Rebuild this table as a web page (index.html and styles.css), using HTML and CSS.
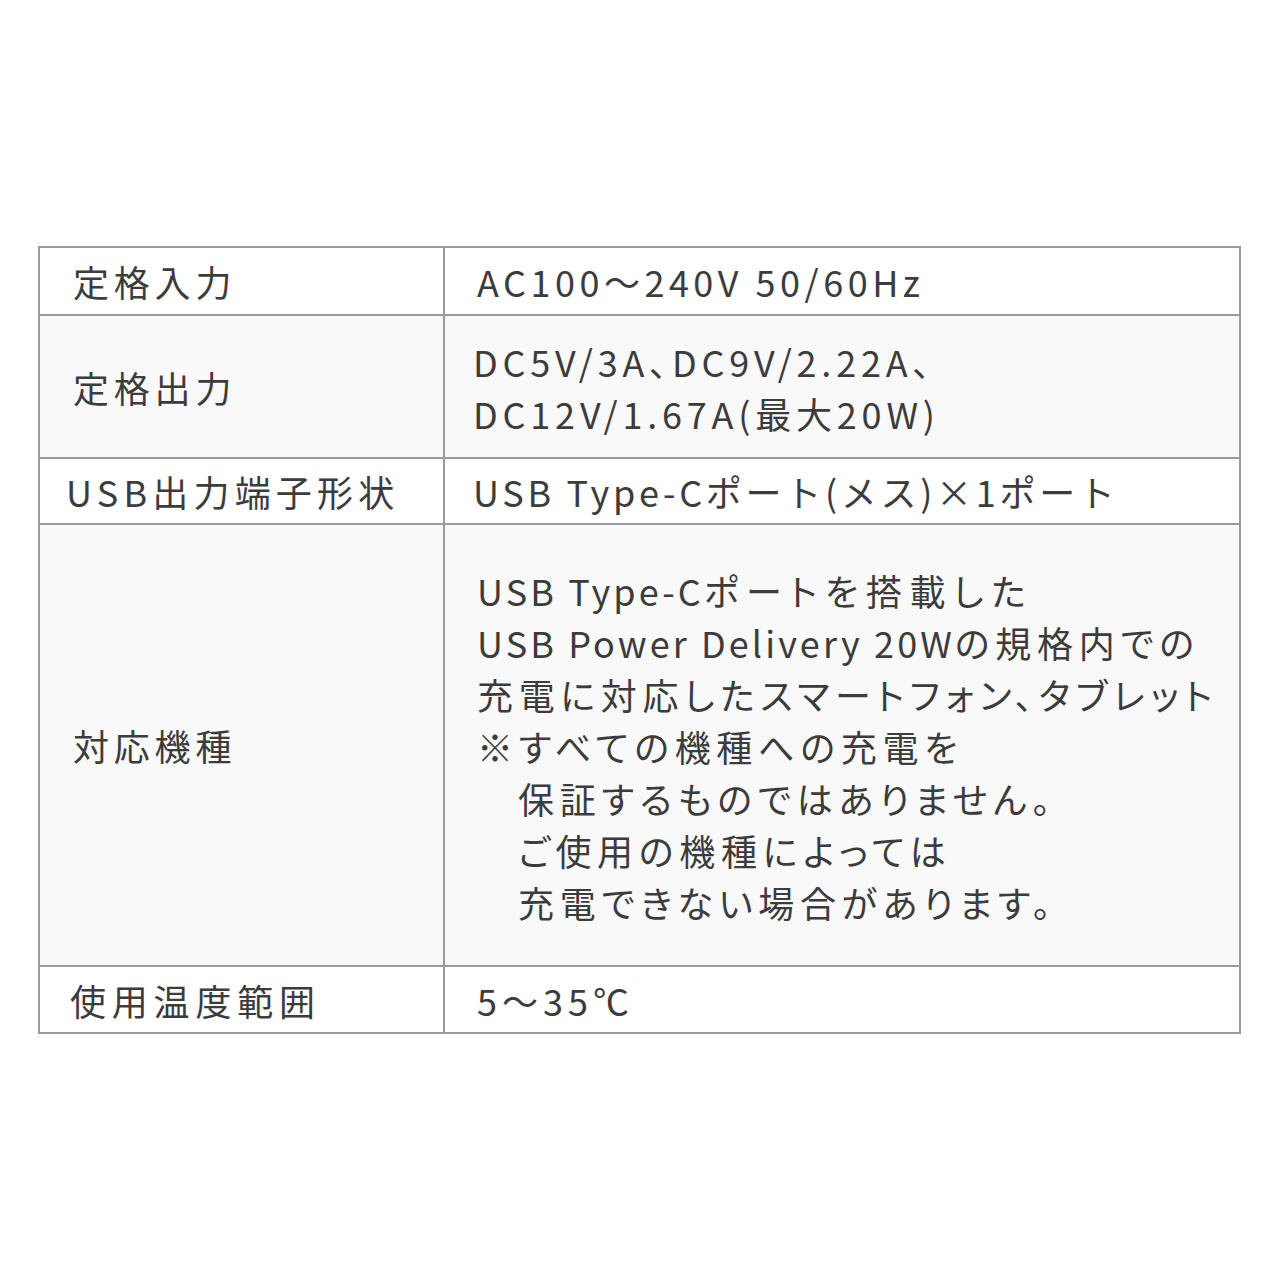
FILE: index.html
```html
<!DOCTYPE html>
<html lang="ja">
<head>
<meta charset="utf-8">
<link rel="stylesheet" href="styles.css">
</head>
<body>
<div class="page">
  <table class="spec">
    <tr class="r1">
      <th class="k k1">定格入力</th>
      <td class="v v1">AC100〜240V 50/60Hz</td>
    </tr>
    <tr class="r2 alt">
      <th class="k k2">定格出力</th>
      <td class="v v2">DC5V/3A、DC9V/2.22A、<br>DC12V/1.67A(最大20W)</td>
    </tr>
    <tr class="r3">
      <th class="k k3">USB出力端子形状</th>
      <td class="v v3">USB Type-Cポート(メス)×1ポート</td>
    </tr>
    <tr class="r4 alt">
      <th class="k k4">対応機種</th>
      <td class="v v4">
        <div><span class="lat">USB Type-C</span><span class="jp1">ポートを搭載した</span></div>
        <div><span class="lat">USB Power Delivery 20W</span>の規格内での</div>
        <div>充電に対応したスマートフォン、タブレット</div>
        <div>※すべての機種への充電を</div>
        <div class="ind">保証するものではありません。</div>
        <div class="ind">ご使用の機種によっては</div>
        <div class="ind">充電できない場合があります。</div>
      </td>
    </tr>
    <tr class="r5">
      <th class="k k5">使用温度範囲</th>
      <td class="v v5">5〜35℃</td>
    </tr>
  </table>
</div>
</body>
</html>
```
FILE: styles.css
```css
html, body {
  margin: 0;
  padding: 0;
  background: #ffffff;
}
.page {
  width: 1280px;
  height: 1280px;
  padding-top: 246px;
  padding-left: 38px;
  box-sizing: border-box;
}
.spec {
  border-collapse: collapse;
  width: 1203px;
  font-family: "Noto Sans CJK JP", "Noto Sans", sans-serif;
  font-size: 36px;
  color: #3c3c3c;
  table-layout: fixed;
}
.spec .k, .spec .v {
  border: 2px solid #9b9b9b;
  text-align: left;
  font-weight: 400;
  vertical-align: middle;
  padding: 0;
  line-height: 52px;
}
.alt { background: #f9f9f9; }
.spec .k { width: 370px; padding-left: 33px; letter-spacing: 4.8px; }
.spec .v { padding-left: 32px; letter-spacing: 4px; }
.r1 { height: 68px; }
.r2 { height: 143px; }
.r3 { height: 66px; }
.r4 { height: 442px; }
.r5 { height: 67px; }
.spec .k3 { padding-left: 26px; letter-spacing: 5.2px; }
.spec .k5 { padding-left: 30px; letter-spacing: 5.8px; }
.spec .v1 { letter-spacing: 4.5px; }
.spec .v2 { padding-left: 28px; letter-spacing: 4.8px; font-feature-settings: "palt"; }
.spec .v3 { padding-left: 28px; letter-spacing: 3.7px; }
.spec .v4 { padding-top: 2px; letter-spacing: 5.7px; font-feature-settings: "palt"; }
.spec .v4 .lat { letter-spacing: 3.1px; }
.spec .v4 .jp1 { letter-spacing: 7.7px; }
.spec .v5 { letter-spacing: 5px; }
.ind { padding-left: 41px; }
```
